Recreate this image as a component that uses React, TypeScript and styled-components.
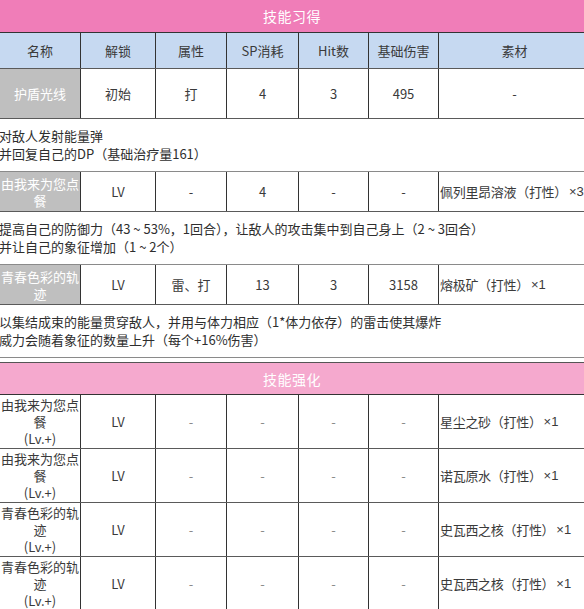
import React from 'react'
import styled, { createGlobalStyle } from 'styled-components'

const GlobalStyle = createGlobalStyle`
  html, body {
    margin: 0;
    padding: 0;
    background: #ffffff;
    overflow: hidden;
  }
  body {
    font-family: "Noto Sans CJK SC", "Microsoft YaHei", "Noto Sans", sans-serif;
    font-size: 13px;
    color: #333333;
  }
`

const COLUMNS = '81px 75px 71px 72px 70px 70px 151px'

const Page = styled.div`
  width: 590px;
  display: flex;
  flex-direction: column;
`

const Section = styled.section<{ $gap?: number }>`
  display: flex;
  flex-direction: column;
  margin-top: ${props => props.$gap || 0}px;
`

const Banner = styled.div<{ $soft?: boolean }>`
  height: 33px;
  box-sizing: border-box;
  display: flex;
  align-items: center;
  justify-content: center;
  padding-right: 6px;
  background-color: ${props => (props.$soft ? '#f5a9ce' : '#f07db8')};
  border-top: ${props => (props.$soft ? '1px solid #555555' : 'none')};
  border-bottom: 1px solid #333333;
  color: #ffffff;
  font-size: 14px;
  letter-spacing: 0.5px;
`

const Row = styled.div<{ $h?: number; $head?: boolean }>`
  display: grid;
  grid-template-columns: ${COLUMNS};
  min-height: ${props => props.$h || 0}px;
  box-sizing: border-box;
  background-color: ${props => (props.$head ? '#c6d9f1' : '#ffffff')};
  border-bottom: 1px solid #5a5a5a;
`

const Cell = styled.div<{ $grey?: boolean; $left?: boolean; $faint?: boolean }>`
  display: flex;
  align-items: center;
  justify-content: ${props => (props.$left ? 'flex-start' : 'center')};
  text-align: ${props => (props.$left ? 'left' : 'center')};
  padding: ${props => (props.$left ? '1px 0 1px 1px' : '1px 1px')};
  box-sizing: border-box;
  line-height: 17px;
  letter-spacing: ${props => (props.$left ? '-0.3px' : 'normal')};
  white-space: ${props => (props.$left ? 'nowrap' : 'normal')};
  border-right: 1px solid #333333;
  background-color: ${props => (props.$grey ? '#bfbfbf' : 'transparent')};
  color: ${props => (props.$grey ? '#ffffff' : props.$faint ? '#8a8a8a' : '#3a3a3a')};

  &:last-child {
    border-right: none;
  }
`

const Times = styled.span`
  font-family: "Liberation Sans", Arial, sans-serif;
  letter-spacing: 0;
  margin-left: 2px;
`

const Description = styled.div`
  padding: 8px 0 8px 0;
  margin-left: -1px;
  line-height: 18px;
  color: #2e2e2e;
  border-bottom: 1px solid #8a8a8a;
  white-space: nowrap;
`

type Skill = {
  name: string
  unlock: string
  attr: string
  sp: string
  hit: string
  dmg: string
  mat: string
  desc: string[]
  height: number
}

const headers = ['名称', '解锁', '属性', 'SP消耗', 'Hit数', '基础伤害', '素材']

const skills: Skill[] = [
  {
    name: '护盾光线',
    unlock: '初始',
    attr: '打',
    sp: '4',
    hit: '3',
    dmg: '495',
    mat: '-',
    desc: ['对敌人发射能量弹', '并回复自己的DP（基础治疗量161）'],
    height: 50,
  },
  {
    name: '由我来为您点餐',
    unlock: 'LV',
    attr: '-',
    sp: '4',
    hit: '-',
    dmg: '-',
    mat: '佩列里昂溶液（打性）×3',
    desc: [
      '提高自己的防御力（43 ~ 53%，1回合），让敌人的攻击集中到自己身上（2 ~ 3回合）',
      '并让自己的象征增加（1 ~ 2个）',
    ],
    height: 40,
  },
  {
    name: '青春色彩的轨迹',
    unlock: 'LV',
    attr: '雷、打',
    sp: '13',
    hit: '3',
    dmg: '3158',
    mat: '熔极矿（打性）×1',
    desc: [
      '以集结成束的能量贯穿敌人，并用与体力相应（1*体力依存）的雷击使其爆炸',
      '威力会随着象征的数量上升（每个+16%伤害）',
    ],
    height: 40,
  },
]

const upgrades = [
  { name: '由我来为您点餐', mat: '星尘之砂（打性）×1' },
  { name: '由我来为您点餐', mat: '诺瓦原水（打性）×1' },
  { name: '青春色彩的轨迹', mat: '史瓦西之核（打性）×1' },
  { name: '青春色彩的轨迹', mat: '史瓦西之核（打性）×1' },
]

// the "×n" count is drawn in a latin face so it stays narrow
const Material = ({ text }: { text: string }) => {
  const [label, count] = text.split('×')
  if (count === undefined) return <>{text}</>
  return (
    <>
      {label}
      <Times>×{count}</Times>
    </>
  )
}

const App = () => {
  return (
    <Page>
      <GlobalStyle />
      <Section>
        <Banner>技能习得</Banner>
        <Row $head $h={36}>
          {headers.map(h => (
            <Cell key={h}>{h}</Cell>
          ))}
        </Row>
        {skills.map(s => (
          <React.Fragment key={s.name}>
            <Row $h={s.height}>
              <Cell $grey>{s.name}</Cell>
              <Cell>{s.unlock}</Cell>
              <Cell>{s.attr}</Cell>
              <Cell>{s.sp}</Cell>
              <Cell>{s.hit}</Cell>
              <Cell>{s.dmg}</Cell>
              <Cell $left={s.mat !== '-'}>
                <Material text={s.mat} />
              </Cell>
            </Row>
            <Description>
              {s.desc.map(line => (
                <div key={line}>{line}</div>
              ))}
            </Description>
          </React.Fragment>
        ))}
      </Section>
      <Section $gap={4}>
        <Banner $soft>技能强化</Banner>
        {upgrades.map((u, i) => (
          <Row key={i} $h={53}>
            <Cell>
              <span>
                {u.name}
                <br />
                (Lv.+)
              </span>
            </Cell>
            <Cell>LV</Cell>
            <Cell $faint>-</Cell>
            <Cell $faint>-</Cell>
            <Cell $faint>-</Cell>
            <Cell $faint>-</Cell>
            <Cell $left>
              <Material text={u.mat} />
            </Cell>
          </Row>
        ))}
      </Section>
    </Page>
  )
}

export default App
